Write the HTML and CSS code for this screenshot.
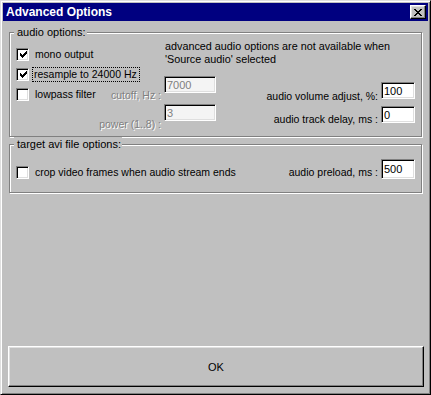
FILE: index.html
```html
<!DOCTYPE html>
<html lang="en">
<head>
    <meta charset="UTF-8">
    <title>Advanced Options</title>
    <link rel="stylesheet" href="styles.css">
</head>
<body>
    <div class="window">
        <div class="titlebar">
            <span class="title">Advanced Options</span>
            <button class="close-btn" type="button">
                <svg width="8" height="7" viewBox="0 0 8 7"><path d="M0 0h2v1H0zM6 0h2v1H6zM1 1h2v1H1zM5 1h2v1H5zM2 2h4v1H2zM3 3h2v1H3zM2 4h4v1H2zM1 5h2v1H1zM5 5h2v1H5zM0 6h2v1H0zM6 6h2v1H6z" fill="#000"/></svg>
            </button>
        </div>

        <div class="client">
            <div class="group group-audio">
                <span class="legend">audio options:</span>

                <div class="col col-checks">
                    <label class="check">
                        <span class="box"><svg width="9" height="9" viewBox="0 0 9 9"><path d="M1 2h1v3H1zM2 3h1v3H2zM3 4h1v3H3zM4 3h1v3H4zM5 2h1v3H5zM6 1h1v3H6zM7 0h1v3H7z" fill="#000"/></svg></span>
                        <span class="check-text">mono output</span>
                    </label>
                    <label class="check row-resample">
                        <span class="box"><svg width="9" height="9" viewBox="0 0 9 9"><path d="M1 2h1v3H1zM2 3h1v3H2zM3 4h1v3H3zM4 3h1v3H4zM5 2h1v3H5zM6 1h1v3H6zM7 0h1v3H7z" fill="#000"/></svg></span>
                        <span class="check-text focused">resample to 24000 Hz</span>
                    </label>
                    <div class="lowpass-row">
                        <label class="check">
                            <span class="box"></span>
                            <span class="check-text">lowpass filter</span>
                        </label>
                        <span class="dim-label">cutoff, Hz :</span>
                    </div>
                    <div class="dim-label power-label">power (1..8) :</div>
                </div>

                <div class="col col-mid">
                    <p class="note">advanced audio options are not available when<br>'Source audio' selected</p>
                    <input class="edit edit-wide edit-cutoff" type="text" value="7000" disabled>
                    <input class="edit edit-wide edit-power" type="text" value="3" disabled>
                </div>

                <div class="col col-right">
                    <div class="field field-volume">
                        <span class="field-label">audio volume adjust, %:</span>
                        <input class="edit edit-small" type="text" value="100">
                    </div>
                    <div class="field field-delay">
                        <span class="field-label">audio track delay, ms :</span>
                        <input class="edit edit-small" type="text" value="0">
                    </div>
                </div>
            </div>

            <div class="group group-avi">
                <span class="legend">target avi file options:</span>
                <label class="check">
                    <span class="box"></span>
                    <span class="check-text">crop video frames when audio stream ends</span>
                </label>
                <div class="field field-preload">
                    <span class="field-label">audio preload, ms :</span>
                    <input class="edit edit-small edit-preload" type="text" value="500">
                </div>
            </div>

            <button class="ok-btn" type="button">OK</button>
        </div>
    </div>
</body>
</html>
```

FILE: styles.css
```css
body {
    margin: 0;
    background: #c0c0c0;
    font-family: "Liberation Sans", Arial, sans-serif;
    font-size: 10.5px;
    color: #000;
}

.window {
    width: 431px;
    height: 395px;
    box-sizing: border-box;
    display: flex;
    flex-direction: column;
    background: #c0c0c0;
    border: 1px solid;
    border-color: #dfdfdf #000 #000 #dfdfdf;
    box-shadow: inset 1px 1px 0 #fff, inset -1px -1px 0 #808080;
    padding: 2px;
}

/* title bar */
.titlebar {
    height: 18px;
    display: flex;
    align-items: center;
    justify-content: space-between;
    background: #000080;
    color: #fff;
    padding: 0 2px 0 3px;
    margin-bottom: 1px;
}

.title {
    font-weight: bold;
    font-size: 12px;
    line-height: 14px;
}

.close-btn {
    width: 16px;
    height: 14px;
    padding: 0;
    display: flex;
    align-items: center;
    justify-content: center;
    background: #c0c0c0;
    border: 1px solid;
    border-color: #fff #000 #000 #fff;
    box-shadow: inset -1px -1px 0 #808080, inset 1px 1px 0 #dfdfdf;
}

.close-btn svg {
    display: block;
    margin: 0 0 0 -1px;
}

/* dialog body */
.client {
    flex: 1;
    display: flex;
    flex-direction: column;
}

.group {
    position: relative;
    box-sizing: border-box;
    width: 413px;
    margin-left: 6px;
    border: 1px solid #808080;
    box-shadow: inset 1px 1px 0 #fff, 1px 1px 0 #fff;
}

.legend {
    position: absolute;
    top: -8px;
    left: 4px;
    padding: 0 1px 0 3px;
    background: #c0c0c0;
    font-size: 11px;
    line-height: 14px;
}

.group-audio {
    margin-top: 10px;
    height: 105px;
    display: flex;
}

.col {
    display: flex;
    flex-direction: column;
}

.col-checks {
    width: 154px;
    box-sizing: border-box;
    padding: 15px 3px 0 6px;
}

.check {
    display: flex;
    align-items: center;
    height: 13px;
    line-height: 13px;
    white-space: nowrap;
}

.box {
    width: 13px;
    height: 13px;
    box-sizing: border-box;
    flex: none;
    display: flex;
    align-items: center;
    justify-content: center;
    background: #fff;
    border: 1px solid;
    border-color: #808080 #fff #fff #808080;
    box-shadow: inset 1px 1px 0 #000, inset -1px -1px 0 #dfdfdf;
}

.box svg {
    display: block;
    margin: 1px 0 0 1px;
}

.check-text {
    margin-left: 5px;
    padding: 0 1px;
}

.check-text.focused {
    margin-left: 4px;
    padding: 0 2px 0 1px;
    outline: 1px dotted #000;
    outline-offset: 0;
}

.row-resample {
    margin-top: 7px;
}

.lowpass-row {
    display: flex;
    justify-content: space-between;
    align-items: center;
    margin-top: 6px;
}

.dim-label {
    color: #808080;
    text-shadow: 1px 1px 0 #fff;
    line-height: 13px;
    white-space: nowrap;
}

.lowpass-row .dim-label {
    margin-top: 2px;
}

.power-label {
    text-align: right;
    margin-top: 16px;
}

.col-mid {
    width: 52px;
}

.note {
    margin: 7px 0 0 1px;
    font-size: 10.8px;
    line-height: 13px;
    white-space: nowrap;
}

.edit {
    box-sizing: border-box;
    height: 17px;
    margin: 0;
    padding: 0 2px;
    font-family: "Liberation Sans", Arial, sans-serif;
    font-size: 11px;
    color: #000;
    background: #fff;
    border: 1px solid;
    border-color: #808080 #fff #fff #808080;
    box-shadow: inset 1px 1px 0 #000, inset -1px -1px 0 #dfdfdf;
    outline: none;
}

.edit:disabled {
    color: #808080;
    background: #f4f4f4;
}

.edit-wide {
    width: 52px;
}

.edit-cutoff {
    margin-top: 10px;
}

.edit-power {
    margin-top: 11px;
}

.edit-small {
    width: 34px;
}

.col-right {
    flex: 1;
    align-items: flex-end;
    padding: 49px 6px 0 0;
}

.field {
    display: flex;
    align-items: flex-end;
    white-space: nowrap;
}

.field-label {
    line-height: 13px;
    margin: 0 3px -4px 0;
}

.field-delay {
    margin-top: 7px;
}

.field-delay .field-label {
    margin-bottom: -3px;
}

.group-avi {
    margin-top: 7px;
    height: 49px;
    display: flex;
    align-items: flex-end;
    justify-content: space-between;
    padding: 0 6px 13px 6px;
}

.field-preload .field-label {
    margin-bottom: 0;
}

.edit-preload {
    height: 20px;
}

.ok-btn {
    margin: auto 0 5px 5px;
    width: 416px;
    height: 41px;
    padding: 0;
    font-family: "Liberation Sans", Arial, sans-serif;
    font-size: 11px;
    color: #000;
    background: #c0c0c0;
    border: 1px solid;
    border-color: #fff #000 #000 #fff;
    box-shadow: inset -1px -1px 0 #808080, inset 1px 1px 0 #dfdfdf;
}
```
